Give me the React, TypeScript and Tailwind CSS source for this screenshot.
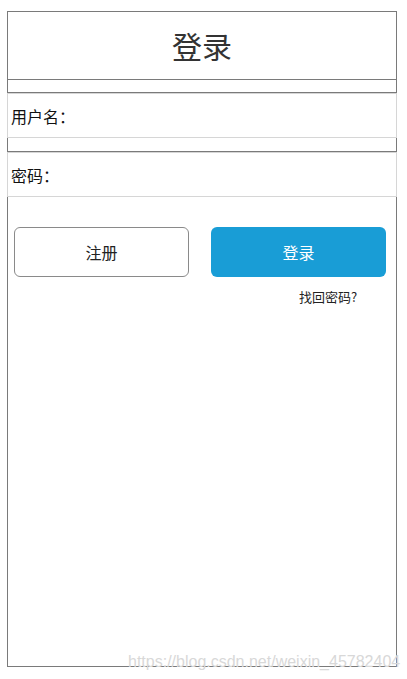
import React from "react";

export default function App() {
  const cjk = { fontFamily: '"Noto Sans CJK SC", "Noto Sans", sans-serif' };
  return (
    <div className="relative w-[407px] h-[679px] bg-white" style={cjk}>
      <div className="absolute left-[7px] top-[11px] w-[390px] h-[656px] flex flex-col">
        <div className="h-[69px] border border-[#7a7a7a] flex items-center justify-center text-[30px] text-[#333]">
          登录
        </div>
        <div className="h-[13px] border-x border-b border-[#7a7a7a]" />
        <div className="h-[45px] border border-[#d6d6d6] flex items-center pl-[3px] text-[16px] text-[#111]">
          用户名：
        </div>
        <div className="h-[14px] border-x border-b border-[#7a7a7a]" />
        <div className="h-[45px] border border-[#d6d6d6] flex items-center pl-[3px] text-[16px] text-[#111]">
          密码：
        </div>
        <div className="flex-1 border-x border-b border-[#7a7a7a] flex flex-col">
          <div className="flex justify-between pl-[6px] pr-[10px] pt-[30px]">
            <div className="w-[175px] h-[50px] rounded-[6px] border border-[#8a8a8a] flex items-center justify-center text-[16px] text-[#222]">
              注册
            </div>
            <div className="w-[175px] h-[50px] rounded-[6px] bg-[#199dd6] flex items-center justify-center text-[16px] text-white">
              登录
            </div>
          </div>
          <div className="mt-[10px] pl-[291px] text-[13px] text-[#222] leading-[20px]">找回密码?</div>
        </div>
      </div>
      <div
        className="absolute left-[128px] top-[650px] text-[16px] text-[#d8d8d8] whitespace-nowrap"
        style={{ fontFamily: '"Liberation Sans", Arial, sans-serif' }}
      >
        https://blog.csdn.net/weixin_45782404
      </div>
    </div>
  );
}
